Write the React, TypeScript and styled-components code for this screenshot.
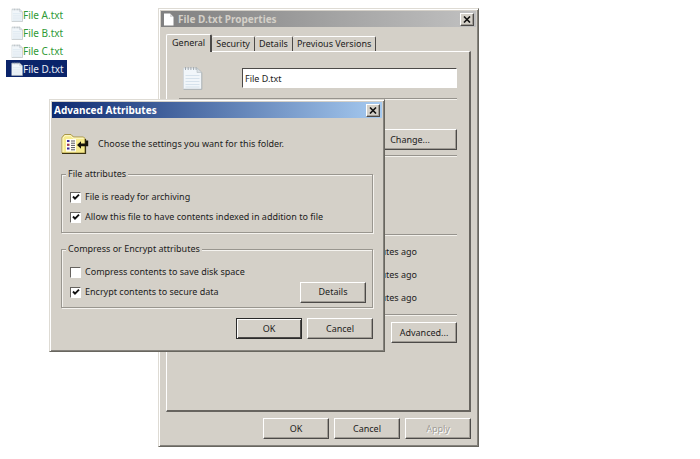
import React from "react";
import styled, { createGlobalStyle, css } from "styled-components";

const face = "#d4d0c8";
const light = "#ffffff";
const shade = "#85827c";
const dark = "#4c4a48";
const sans = `"Noto Sans", "DejaVu Sans Condensed", sans-serif`;

const GlobalStyle = createGlobalStyle`
  * { box-sizing: border-box; }
  body { margin: 0; background: #fff; color: #1c1c1c; font: 9px/12px ${sans}; }
  button, input { font: inherit; color: inherit; }
`;

const Desktop = styled.main`
  position: relative;
  min-height: 100vh;
  overflow: hidden;
`;

const FileList = styled.ul`
  display: flex;
  flex-direction: column;
  align-items: flex-start;
  margin: 0;
  padding: 6px;
  list-style: none;
  gap: 1px;
`;

const FileItem = styled.li<{ $selected?: boolean }>`
  display: flex;
  align-items: center;
  height: 17px;
  padding: 0 3px 0 5px;
  font-size: 10px;
  color: ${p => (p.$selected ? "#e8ecf6" : "#2f9a36")};
  background: ${p => (p.$selected ? "#0a246a" : "transparent")};
`;

const raised = css`
  border: 1px solid;
  border-color: ${light} ${dark} ${dark} ${light};
  box-shadow: inset -1px -1px 0 #a09c95;
`;

const Window = styled.section<{ $left: number; $top: number; $width: number }>`
  position: absolute;
  left: ${p => p.$left}px;
  top: ${p => p.$top}px;
  width: ${p => p.$width}px;
  padding: 2px;
  background: ${face};
  border: 1px solid;
  border-color: #dedbd4 #68665f #68665f #dedbd4;
  box-shadow: inset 1px 1px 0 ${light}, inset -1px -1px 0 ${shade};
`;

const TitleBar = styled.header<{ $active?: boolean }>`
  display: flex;
  align-items: center;
  gap: 4px;
  height: 16px;
  padding: 0 2px;
  color: ${p => (p.$active ? "#fff" : "#d4d0c8")};
  background: ${p =>
    p.$active
      ? "linear-gradient(90deg, #0d2a70, #a6caf0)"
      : "linear-gradient(90deg, #808080, #c0c0c0)"};
`;

const Title = styled.h1`
  flex: 1;
  margin: 0;
  font-size: 10px;
  line-height: 16px;
  font-weight: 700;
`;

const CloseButton = styled.button`
  ${raised}
  display: grid;
  place-items: center;
  width: 14px;
  height: 13px;
  padding: 0;
  background: ${face};
`;

const Button = styled.button<{ $default?: boolean; $wide?: boolean }>`
  ${raised}
  width: ${p => (p.$wide ? 94 : 66)}px;
  height: 21px;
  padding: 0;
  background: ${face};
  line-height: 18px;
  text-align: center;
  ${p =>
    p.$default &&
    css`
      border-color: #2a2a2a;
      box-shadow: inset 1px 1px 0 ${light}, inset -1px -1px 0 ${dark};
    `}
  &:disabled {
    color: #a09d97;
    text-shadow: 1px 1px 0 #fff;
  }
`;

const ButtonRow = styled.footer`
  display: flex;
  justify-content: flex-end;
  gap: 5px;
`;

const PropertiesBody = styled.div`
  padding: 6px 5px 5px;
`;

const Tabs = styled.div`
  display: flex;
  align-items: flex-end;
  height: 18px;
`;

const Tab = styled.button<{ $current?: boolean }>`
  height: 15px;
  padding: 0 4px;
  background: ${face};
  border: solid;
  border-width: 1px 1px 0 0;
  border-color: ${light} ${dark} ${face} ${light};
  border-radius: 2px 2px 0 0;
  ${p =>
    p.$current &&
    css`
      position: relative;
      height: 18px;
      padding: 0 5px 2px;
      margin-bottom: -1px;
      border-left-width: 1px;
      border-right-width: 2px;
    `}
`;

const Page = styled.div`
  min-height: 361px;
  padding: 14px 12px 0;
  border: solid;
  border-width: 1px 2px 2px 1px;
  border-color: ${light} #67645f #67645f ${light};
  margin-bottom: 6px;
`;

const NameRow = styled.div`
  display: flex;
  align-items: flex-start;
  gap: 39px;
  height: 32px;
  padding-left: 3px;
`;

const NameInput = styled.input`
  flex: 1;
  min-width: 0;
  height: 20px;
  margin-top: 2px;
  padding: 0 2px;
  border: 1px solid;
  border-color: ${dark} ${light} ${light} ${dark};
  outline: 0;
  background: #fff;
`;

const Section = styled.div<{ $height: number }>`
  height: ${p => p.$height}px;
  border-top: 1px solid #96938d;
  box-shadow: inset 0 1px 0 #f3f1ec;
  display: flex;
  flex-direction: column;
  align-items: flex-end;
`;

const ChangeRow = styled.div`
  padding-top: 30px;
`;

const Times = styled.div`
  display: flex;
  flex-direction: column;
  gap: 11px;
  padding: 11px 40px 0 0;
`;

const AdvancedRow = styled.div`
  padding-top: 7px;
`;

const AdvancedBody = styled.div`
  padding: 14px 9px 10px;
`;

const Intro = styled.div`
  display: flex;
  align-items: center;
  gap: 9px;
  height: 24px;
  margin-bottom: 18px;
`;

const Groups = styled.div`
  display: flex;
  flex-direction: column;
  gap: 16px;
  margin-bottom: 10px;
`;

const Group = styled.fieldset`
  position: relative;
  min-width: 0;
  margin: 0;
  padding: 10px 6px 9px 8px;
  border: 1px solid #99968f;
  box-shadow: 1px 1px 0 #f5f3ef, inset 1px 1px 0 #f5f3ef;
`;

const Legend = styled.legend`
  float: left;
  position: absolute;
  top: -7px;
  left: 4px;
  padding: 0 2px;
  background: ${face};
`;

const Options = styled.div`
  display: flex;
  flex-direction: column;
  gap: 8px;
  padding-top: 6px;
`;

const CheckLabel = styled.label`
  display: flex;
  align-items: center;
  gap: 4px;
`;

const Checkbox = styled.input`
  appearance: none;
  width: 11px;
  height: 11px;
  margin: 0;
  border: 1px solid;
  border-color: #65625e ${light} ${light} #65625e;
  background: #fff;
  &:checked {
    background: #fff
      url("data:image/svg+xml,%3Csvg xmlns='http://www.w3.org/2000/svg' viewBox='0 0 8 8'%3E%3Cpath d='M1 3.5 3 5.6 7 1.6' fill='none' stroke='%23111' stroke-width='1.9'/%3E%3C/svg%3E")
      center / 8px 8px no-repeat;
  }
`;

const OptionRow = styled.div`
  display: flex;
  align-items: center;
  justify-content: space-between;
  height: 12px;
`;

const CloseIcon = () => (
  <svg width="8" height="7" viewBox="0 0 8 7" aria-hidden="true">
    <path d="M1 0.5 7 6.5M7 0.5 1 6.5" stroke="#111" strokeWidth="1.6" />
  </svg>
);

const NotepadIcon = ({ width, height }: { width: number; height: number }) => (
  <svg width={width} height={height} viewBox="0 0 20 24" aria-hidden="true">
    <path d="M1 2H14.5L19.3 6.5V23.3H1Z" fill="#f1f6fa" />
    <path d="M14.5 2 19.3 6.5V23.3H1" fill="none" stroke="#a8afb3" strokeWidth="1" />
    <path d="M1 23V2H14.5" fill="none" stroke="#cfd6da" strokeWidth="0.8" />
    <path d="M14.5 2V6.5H19" fill="#dbe1e5" stroke="#b4bcc1" strokeWidth="0.6" />
    <path d="M3 9.5H17M3 12.5H17M3 15.5H17M3 18.5H17M3 21H17" stroke="#d3e0ea" strokeWidth="0.9" />
    <path d="M3 1V4M5.7 1V4M8.4 1V4M11.1 1V4M13.6 1V4" stroke="#a1a9ae" strokeWidth="1" />
  </svg>
);

const PageIcon = () => (
  <svg width="11" height="13" viewBox="0 0 11 13" aria-hidden="true">
    <path d="M1 0.5H7L10.5 4V12.5H1Z" fill="#fff" />
    <path d="M7 0.5V4H10.5" fill="#d9d9d9" />
  </svg>
);

const FolderIcon = () => (
  <svg width="28" height="22" viewBox="0 0 28 22" aria-hidden="true">
    <path d="M1 4.5 3.5 1.5H10L12.5 4H22.5L24 5.5V20H1Z" fill="#f6ea8e" stroke="#a8964a" strokeWidth="1" />
    <path d="M2 19V5L4 2.7H9.5L12 5.2H22.5" fill="none" stroke="#fffbd0" strokeWidth="1" />
    <path d="M1 20.5H24.5V6" fill="none" stroke="#3b3312" strokeWidth="1.2" />
    <rect x="5" y="6" width="10" height="12.5" fill="#fffef4" />
    <path d="M6 8H8.5M6 15.5H8.5" stroke="#3a2a9c" strokeWidth="2.2" />
    <path d="M6 11.8H8.5" stroke="#a23b4c" strokeWidth="2.2" />
    <path d="M10 8H14M10 10.2H14M10 12.4H14M10 14.6H14M10 16.8H14" stroke="#45434d" strokeWidth="0.9" />
    <path d="M16 12 20 8.3V10.6H24.6V7.5H27.2V13.3H20V15.7Z" fill="#16130c" />
  </svg>
);

type CheckProps = { id: string; text: string; checked?: boolean };
const Check = ({ id, text, checked }: CheckProps) => (
  <CheckLabel htmlFor={id}>
    <Checkbox id={id} type="checkbox" defaultChecked={checked} />
    {text}
  </CheckLabel>
);

const files = ["File A.txt", "File B.txt", "File C.txt", "File D.txt"];
const tabs = ["General", "Security", "Details", "Previous Versions"];

export default function App() {
  return (
    <Desktop>
      <GlobalStyle />
      <FileList>
        {files.map(name => (
          <FileItem key={name} $selected={name === "File D.txt"}>
            <NotepadIcon width={12} height={14} />
            {name}
          </FileItem>
        ))}
      </FileList>

      <Window $left={158} $top={8} $width={321} role="dialog" aria-labelledby="properties-title">
        <TitleBar>
          <PageIcon />
          <Title id="properties-title">File D.txt Properties</Title>
          <CloseButton aria-label="Close"><CloseIcon /></CloseButton>
        </TitleBar>
        <PropertiesBody>
          <Tabs role="tablist">
            {tabs.map((name, i) => (
              <Tab key={name} role="tab" aria-selected={i === 0} $current={i === 0}>{name}</Tab>
            ))}
          </Tabs>
          <Page>
            <NameRow>
              <NotepadIcon width={21} height={24} />
              <NameInput aria-label="File name" defaultValue="File D.txt" />
            </NameRow>
            <Section $height={57}>
              <ChangeRow><Button $wide>Change...</Button></ChangeRow>
            </Section>
            <Section $height={79} />
            <Section $height={80}>
              <Times>
                <span>minutes ago</span>
                <span>minutes ago</span>
                <span>minutes ago</span>
              </Times>
            </Section>
            <Section $height={40}>
              <AdvancedRow><Button>Advanced...</Button></AdvancedRow>
            </Section>
          </Page>
          <ButtonRow>
            <Button>OK</Button>
            <Button>Cancel</Button>
            <Button disabled>Apply</Button>
          </ButtonRow>
        </PropertiesBody>
      </Window>

      <Window $left={49} $top={99} $width={336} role="dialog" aria-labelledby="advanced-title">
        <TitleBar $active>
          <Title id="advanced-title">Advanced Attributes</Title>
          <CloseButton aria-label="Close"><CloseIcon /></CloseButton>
        </TitleBar>
        <AdvancedBody>
          <Intro>
            <FolderIcon />
            Choose the settings you want for this folder.
          </Intro>
          <Groups>
            <Group>
              <Legend>File attributes</Legend>
              <Options>
                <OptionRow><Check id="archive" text="File is ready for archiving" checked /></OptionRow>
                <OptionRow><Check id="index" text="Allow this file to have contents indexed in addition to file" checked /></OptionRow>
              </Options>
            </Group>
            <Group>
              <Legend>Compress or Encrypt attributes</Legend>
              <Options>
                <OptionRow><Check id="compress" text="Compress contents to save disk space" /></OptionRow>
                <OptionRow>
                  <Check id="encrypt" text="Encrypt contents to secure data" checked />
                  <Button>Details</Button>
                </OptionRow>
              </Options>
            </Group>
          </Groups>
          <ButtonRow>
            <Button $default>OK</Button>
            <Button>Cancel</Button>
          </ButtonRow>
        </AdvancedBody>
      </Window>
    </Desktop>
  );
}
